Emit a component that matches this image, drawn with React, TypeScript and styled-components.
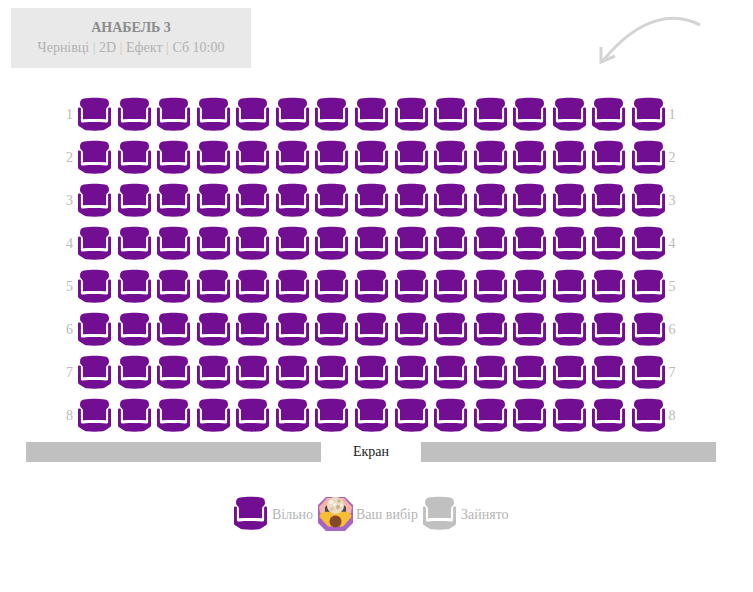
import React from "react";
import styled, { createGlobalStyle } from "styled-components";

const Global = createGlobalStyle`
  html, body { margin: 0; padding: 0; background: #fff; }
  body { font-family: "Liberation Serif", "Times New Roman", serif; font-size: 14px; }
`;
const Page = styled.div`
  width: 753px;
  height: 592px;
  overflow: hidden;
`;
const Top = styled.header`
  display: flex;
  justify-content: space-between;
  align-items: flex-start;
  padding: 8px 48px 0 11px;
  height: 97px;
  box-sizing: border-box;
`;
const InfoBox = styled.div`
  width: 240px;
  height: 60px;
  background: #e9e9e9;
  text-align: center;
  padding-top: 10px;
  box-sizing: border-box;
  line-height: 20px;
  color: #b2b2b2;
`;
const Title = styled.div`
  font-weight: bold;
  color: #8c8c8c;
`;
const Sep = styled.span<{ $c: string }>`
  color: ${(p) => p.$c};
`;
const ArrowSvg = styled.svg`
  width: 110px;
  height: 60px;
  margin-top: 4px;
  display: block;
`;
const Hall = styled.div`
  display: grid;
  grid-template-columns: 18px repeat(15, 39.57px) 20px;
  grid-auto-rows: 43px;
  width: max-content;
  margin-left: 60px;
`;
const RowLabel = styled.div<{ $right?: boolean }>`
  color: #bababa;
  font-size: 14px;
  line-height: 35px;
  padding-left: ${(p) => (p.$right ? "0" : "6px")};
  margin-left: ${(p) => (p.$right ? "-3px" : "0")};
`;
const Screen = styled.div`
  display: grid;
  grid-template-columns: 295px 100px 295px;
  margin: 1px 0 0 26px;
  height: 20px;
  width: max-content;
`;
const ScreenBar = styled.div`
  background: #c0c0c0;
`;
const ScreenLabel = styled.div`
  text-align: center;
  line-height: 20px;
  color: #222;
`;
const Legend = styled.div`
  display: flex;
  align-items: flex-start;
  margin: 34px 0 0 234px;
  height: 36px;
`;
const LegendText = styled.span<{ $w: number; $pad: number }>`
  color: #b5b5b5;
  width: ${(p) => p.$w}px;
  flex: none;
  padding: 1px 0 0 ${(p) => p.$pad}px;
  box-sizing: border-box;
  line-height: 36px;
`;
const SeatSvg = styled.svg`
  width: 33px;
  height: 34px;
  display: block;
  flex: none;
`;
const AvatarSvg = styled.svg`
  width: 35px;
  height: 35px;
  display: block;
  flex: none;
  margin-right: -2px;
`;

const Seat = ({ color = "#720e92" }: { color?: string }) => (
  <SeatSvg viewBox="0 0 33 34" fill={color}>
    <path d="M2 6.8C2 3.4 3.5 2.2 6 1.6C12 0.5 21 0.5 27 1.6C29.5 2.2 31 3.4 31 6.8C31 9.8 28.6 10 28.1 12L28 22.3C20 21.9 13 21.9 5 22.3L4.9 12C4.4 10 2 9.8 2 6.8Z" />
    <path d="M0.8 10.6C1.9 10.4 2.7 10.6 2.9 11.2V23.4C2.9 25 3.6 25.6 5 25.4C13 24.8 20 24.8 28 25.4C29.4 25.6 30.1 25 30.1 23.4V11.2C30.3 10.6 31.1 10.4 32.2 10.6C32.8 10.8 33 11.2 33 12V27.6C33 28.4 32.6 28.8 32 29.2L26.8 32.6C26.2 33 25.6 33.1 25 33.2C19 33.8 14 33.8 8 33.2C7.4 33.1 6.8 33 6.2 32.6L1 29.2C0.4 28.8 0 28.4 0 27.6V12C0 11.2 0.2 10.8 0.8 10.6Z" />
  </SeatSvg>
);

const Avatar = () => (
  <AvatarSvg viewBox="0 0 35 35">
    <path d="M8 1H27L35 9V27L27 35H8L0 27V9Z" fill="#a664c4" />
    <path d="M1 11L9 2H14L12 10L7 17H2Z" fill="#f4b4a8" />
    <path d="M34 11L26 2H21L23 10L28 17H33Z" fill="#f4b4a8" />
    <path d="M7 11L13 6H22L28 11V21H7Z" fill="#4b4b4b" />
    <path d="M2 18C5 15.5 9 15.5 12 16H23C26 15.5 30 15.5 33 18L33.5 21L25 30.5H10L1.5 21Z" fill="#f7bd33" />
    <circle cx="17.5" cy="25.5" r="6" fill="#85492a" />
    <circle cx="17.5" cy="9.5" r="8.5" fill="#ecdcc2" />
    <circle cx="13" cy="6" r="2.2" fill="#f9f1e2" />
    <circle cx="20" cy="11" r="2.2" fill="#cdb592" />
    <circle cx="14" cy="13" r="1.8" fill="#d6c1a0" />
    <circle cx="21" cy="5" r="1.8" fill="#cdb592" />
    <circle cx="17" cy="8.5" r="1.6" fill="#fbf5ea" />
    <circle cx="23.5" cy="9" r="1.5" fill="#f9f1e2" />
  </AvatarSvg>
);

const rows = [1, 2, 3, 4, 5, 6, 7, 8];
const cols = Array.from({ length: 15 }, (_, i) => i);

export default function App() {
  return (
    <Page>
      <Global />
      <Top>
        <InfoBox>
          <Title>АНАБЕЛЬ 3</Title>
          <div>
            Чернівці <Sep $c="#b5d3d8">|</Sep> 2D <Sep $c="#dcc6b0">|</Sep> Ефект{" "}
            <Sep $c="#dcc6b0">|</Sep> Сб 10:00
          </div>
        </InfoBox>
        <ArrowSvg viewBox="0 0 110 60" fill="none" stroke="#d4d4d4" strokeWidth="3">
          <path d="M105 13C82 1 46 1 7 50" />
          <path d="M6 35L6 50L20 44" />
        </ArrowSvg>
      </Top>
      <Hall>
        {rows.map((r) => (
          <React.Fragment key={r}>
            <RowLabel>{r}</RowLabel>
            {cols.map((c) => (
              <Seat key={c} />
            ))}
            <RowLabel $right>{r}</RowLabel>
          </React.Fragment>
        ))}
      </Hall>
      <Screen>
        <ScreenBar />
        <ScreenLabel>Екран</ScreenLabel>
        <ScreenBar />
      </Screen>
      <Legend>
        <Seat />
        <LegendText $w={51} $pad={5}>Вільно</LegendText>
        <Avatar />
        <LegendText $w={72} $pad={5}>Ваш вибір</LegendText>
        <Seat color="#c0c0c0" />
        <LegendText $w={60} $pad={5}>Зайнято</LegendText>
      </Legend>
    </Page>
  );
}
